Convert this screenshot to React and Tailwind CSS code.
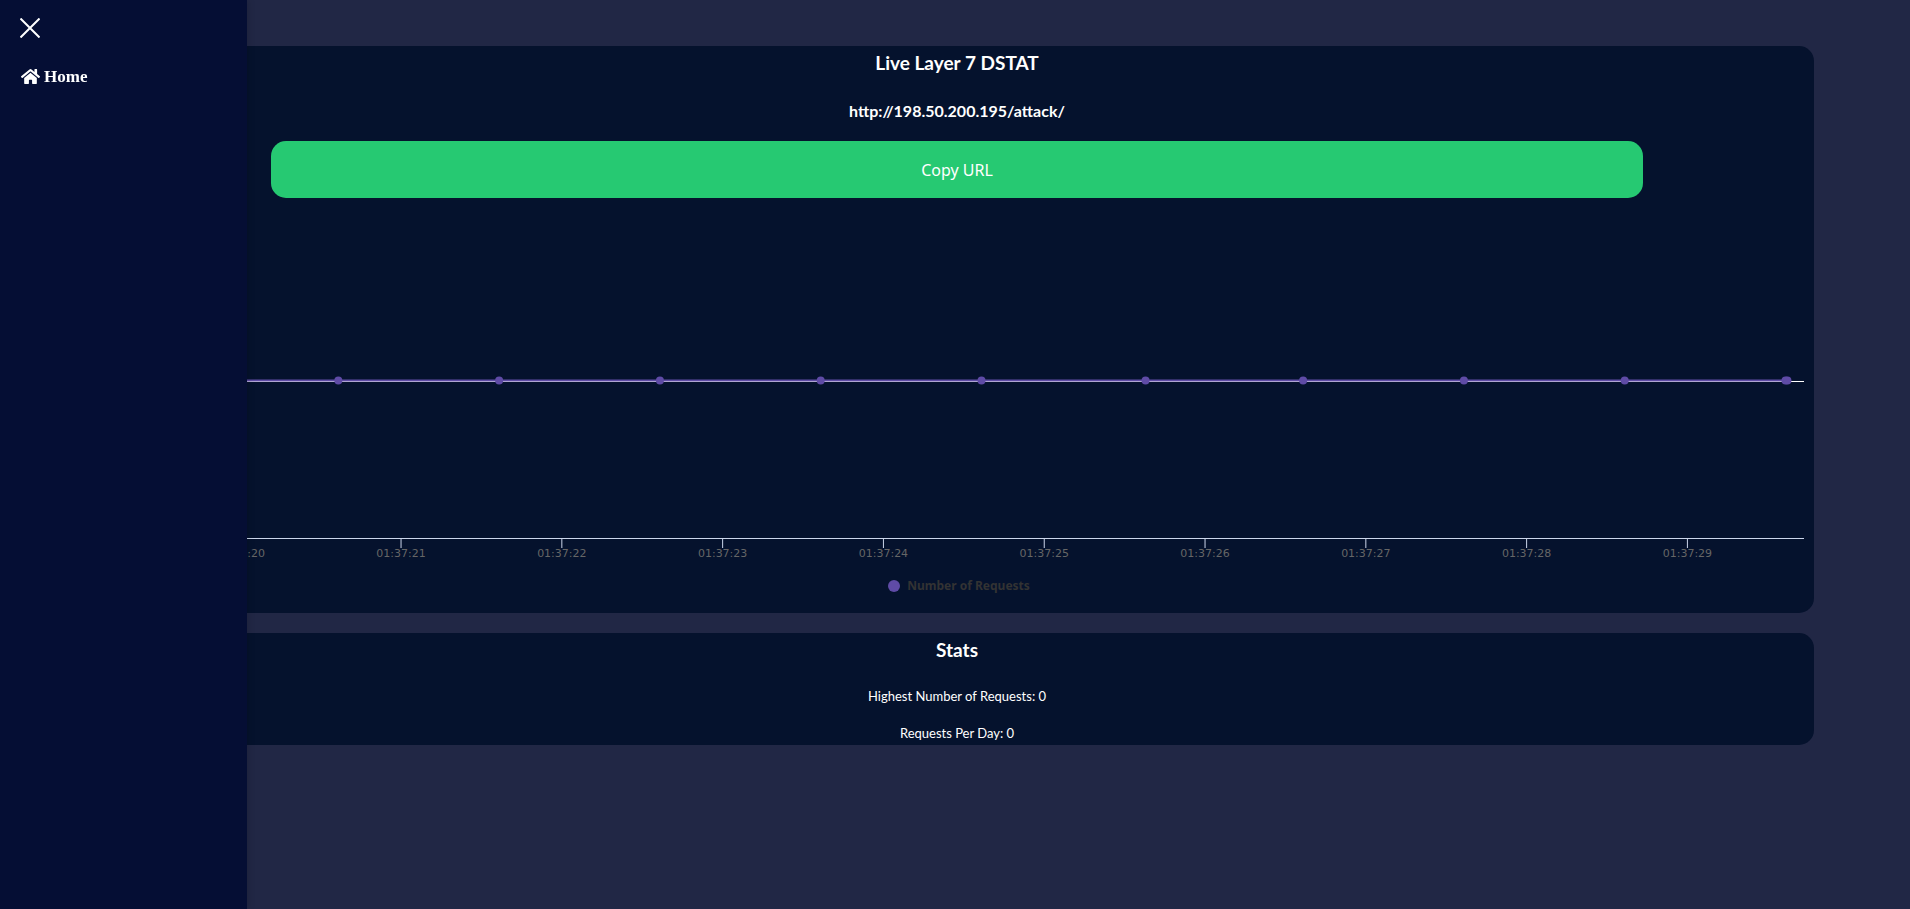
import { FaHome } from "react-icons/fa";

const TICKS = [20, 21, 22, 23, 24, 25, 26, 27, 28, 29];
const POINTS = [20.61, 21.61, 22.61, 23.61, 24.61, 25.63, 26.61, 27.61, 28.61, 29.61, 29.622];

// Plot spans the seconds from 19.19 to 29.725
const toX = (second) => `${(((second - 19.19) / 10.535) * 100).toFixed(3)}%`;

function Chart() {
  return (
    <svg className="block h-[400px] w-full" role="img" aria-label="Number of requests over time">
      <rect x="0" y="178" width="100%" height="1" fill="#ffffff" />
      <rect x="0" y="335" width="100%" height="1" fill="#ccd6eb" />
      {TICKS.map((second) => (
        <g key={second}>
          <line x1={toX(second)} x2={toX(second)} y1="336" y2="345" stroke="#ccd6eb" strokeWidth="1" />
          <text x={toX(second)} y="354" textAnchor="middle" fill="#666666" className="font-['DejaVu_Sans',sans-serif] text-[11px]">
            {`01:37:${second}`}
          </text>
        </g>
      ))}
      <rect x="0" y="176" width={toX(29.62)} height="3" fill="#5f4ba6" fillOpacity="0.5" />
      <rect x="0" y="177" width={toX(29.62)} height="1" fill="#5f4ba6" />
      {POINTS.map((second) => (
        <circle key={second} cx={toX(second)} cy="177.5" r="4" fill="#5f4ba6" />
      ))}
    </svg>
  );
}

export default function App() {
  return (
    <div className="min-h-screen bg-[#212745] font-[Lato,sans-serif] text-white">
      <aside className="fixed inset-y-0 left-0 z-10 w-[247px] bg-[#050e34] shadow-[0_0_8px_rgba(0,0,0,0.2)]">
        <button type="button" aria-label="Close menu" className="mt-[18px] ml-5 block">
          <svg className="size-5" viewBox="0 0 20 20" stroke="currentColor" strokeWidth="2" aria-hidden="true">
            <path d="M0.5 0.5 19.5 19.5M19.5 0.5 0.5 19.5" />
          </svg>
        </button>
        <nav className="mt-[25px] pl-[21px]">
          <a href="#" className="flex items-center gap-1 font-['Liberation_Serif',serif] text-[17px] leading-7 font-bold">
            <FaHome className="mb-[2px] size-[19px]" aria-hidden="true" />
            Home
          </a>
        </nav>
      </aside>

      <main className="flex flex-col gap-5 pt-[46px] pr-24 pl-[100px] text-center">
        <section className="rounded-[15px] bg-[#05122d] pb-[10px]">
          <h1 className="pt-[3px] text-[19px] leading-7 font-bold">Live Layer 7 DSTAT</h1>
          <p className="mt-[22px] text-base leading-6 font-bold">http://198.50.200.195/attack/</p>
          <button type="button" className="mx-auto mt-[18px] block h-[57px] w-4/5 rounded-[15px] bg-[#26c972] font-['Noto_Sans',sans-serif] text-base">
            Copy URL
          </button>
          <div className="mt-[5px] px-[10px]">
            <Chart />
            <div className="-mt-[27px] flex items-center justify-center gap-[7px] pb-[7px] pl-1 font-['Noto_Sans',sans-serif] text-xs leading-5 font-bold text-[#333333]">
              <span className="size-3 rounded-full bg-[#5f4ba6]" />
              Number of Requests
            </div>
          </div>
        </section>

        <section className="rounded-[15px] bg-[#05122d]">
          <h2 className="pt-[3px] text-[19px] leading-7 font-bold">Stats</h2>
          <p className="mt-5 text-[13px] leading-6">Highest Number of Requests: 0</p>
          <p className="mt-[13px] text-[13px] leading-6">Requests Per Day: 0</p>
        </section>
      </main>
    </div>
  );
}
